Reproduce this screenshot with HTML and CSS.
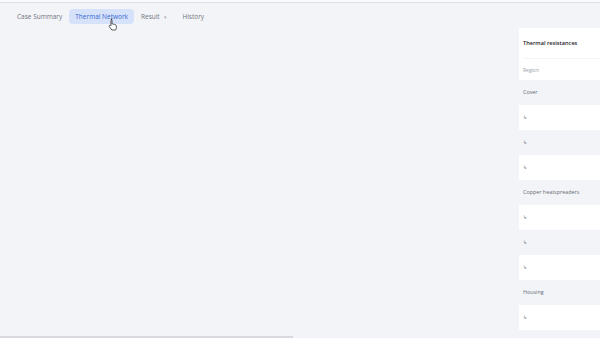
FILE: index.html
```html
<!DOCTYPE html>
<html lang="en">
<head>
    <meta charset="UTF-8">
    <meta name="viewport" content="width=device-width, initial-scale=1.0">
    <title>Thermal Network</title>
    <link rel="stylesheet" href="styles.css">
</head>
<body>
    <div class="app">
        <nav class="tabs">
            <span class="tab">Case Summary</span>
            <span class="tab active">Thermal Network
                <svg class="cursor" width="11" height="13" viewBox="0 0 11 13">
                    <path d="M3 1.2c.6 0 1 .4 1 1V6l.3-.1c.5-.2 1 0 1.2.4.4-.2 1-.1 1.2.4.5-.2 1.1 0 1.3.5l.2.6c.3 1 .3 2.1-.1 3.1L7.6 12H3.9L1.4 8.8c-.4-.5-.3-1.1.2-1.4.4-.3 1-.2 1.3.2l.1.1V2.2c0-.6.4-1 1-1z" fill="#fff" stroke="#333" stroke-width=".8" stroke-linejoin="round"/>
                </svg>
            </span>
            <span class="tab">Result <span class="caret">▾</span></span>
            <span class="tab">History</span>
        </nav>
        <div class="main">
            <div class="canvas"></div>
            <aside class="panel">
                <div class="panel-head">
                    <div class="panel-title">Thermal resistances</div>
                    <div class="panel-label">Region</div>
                </div>
                <div class="row">Cover</div>
                <div class="row alt"><span class="sub">↳</span></div>
                <div class="row"><span class="sub">↳</span></div>
                <div class="row alt"><span class="sub">↳</span></div>
                <div class="row">Copper heatspreaders</div>
                <div class="row alt"><span class="sub">↳</span></div>
                <div class="row"><span class="sub">↳</span></div>
                <div class="row alt"><span class="sub">↳</span></div>
                <div class="row">Housing</div>
                <div class="row alt"><span class="sub">↳</span></div>
            </aside>
        </div>
        <div class="scrollbar"></div>
    </div>
</body>
</html>
```

FILE: styles.css
```css
* {
    margin: 0;
    padding: 0;
    box-sizing: border-box;
}

body {
    font-family: 'Open Sans', 'Noto Sans', sans-serif;
    background-color: #f3f4f8;
    width: 600px;
    height: 338px;
    overflow: hidden;
}

.app {
    position: relative;
    height: 338px;
    border-top: 2px solid #fafafc;
    display: flex;
    flex-direction: column;
}

.app::before {
    content: '';
    display: block;
    height: 1px;
    background-color: #dfe0e5;
}

.tabs {
    display: flex;
    align-items: flex-start;
    gap: 1px;
    padding: 6px 0 0 11px;
    height: 25px;
}

.tab {
    position: relative;
    font-size: 6.5px;
    color: #6f7480;
    padding: 0 6px;
    height: 15px;
    line-height: 15px;
    border-radius: 4px;
}

.tab.active {
    background-color: #d5e2fa;
    color: #3a68cf;
}

.caret {
    font-size: 4.5px;
    color: #a5a9b2;
    margin: 0 2px 0 3px;
}

.cursor {
    position: absolute;
    left: 39px;
    top: 9px;
}

.main {
    flex: 1;
    display: flex;
}

.canvas {
    flex: 1;
}

.panel {
    width: 81px;
    display: flex;
    flex-direction: column;
}

.panel-head {
    background-color: #ffffff;
    height: 52px;
    padding: 11px 0 0 4px;
}

.panel-title {
    font-size: 5.6px;
    font-weight: 600;
    color: #1e2129;
    height: 19px;
}

.panel-label {
    font-size: 5px;
    color: #9a9ea8;
    padding-top: 8px;
    border-top: 1px solid #f4f5f8;
}

.row {
    height: 25px;
    line-height: 25px;
    padding-left: 4px;
    font-size: 5.4px;
    color: #666b75;
    white-space: nowrap;
}

.row.alt {
    background-color: #ffffff;
}

.sub {
    font-family: 'DejaVu Sans', sans-serif;
    font-size: 5px;
    color: #6f737d;
}

.scrollbar {
    position: absolute;
    left: 0;
    bottom: 0;
    width: 293px;
    height: 2px;
    background-color: #d8d9de;
}
```
